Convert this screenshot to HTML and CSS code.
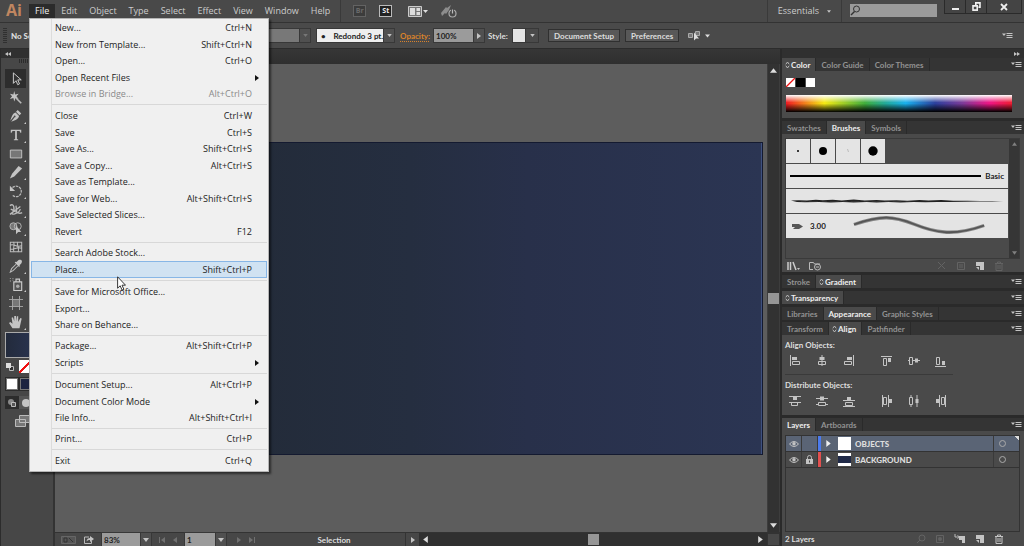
FILE: index.html
```
<!DOCTYPE html>
<html lang="en">
<head>
<meta charset="utf-8">
<title>Vector editor workspace</title>
<link rel="stylesheet" href="styles.css">
</head>
<body>
<svg class="defs" aria-hidden="true">
  <symbol id="flyout" viewBox="0 0 11 7"><path d="M0 1.5h4L2 4z"/><path d="M4.500 1h6v1h-6zM4.500 3h6v1h-6zM4.500 5h6v1h-6z"/></symbol>
  <symbol id="updown" viewBox="0 0 5 8"><path d="M.8 3.300L2.500 1l1.700 2.300M.8 4.700L2.500 7l1.700-2.300" fill="none" stroke="currentColor" stroke-width=".9"/></symbol>
  <symbol id="down" viewBox="0 0 6 4"><path d="M0 0h6L3 4z"/></symbol>
  <symbol id="up" viewBox="0 0 6 4"><path d="M0 4h6L3 0z"/></symbol>
  <symbol id="right" viewBox="0 0 4 6"><path d="M0 0v6l4-3z"/></symbol>
  <symbol id="left" viewBox="0 0 4 6"><path d="M4 0v6L0 3z"/></symbol>
  <symbol id="trash" viewBox="0 0 10 10"><path d="M1 2.500h8M3.500 2.500V1h3v1.500M2 2.500V9.500h6V2.500M4 4v4M6 4v4" fill="none" stroke="currentColor"/></symbol>
  <symbol id="newitem" viewBox="0 0 10 10"><path d="M1 1h8v8H5V5H1z"/><path d="M1 6h3v3z"/></symbol>
  <symbol id="eye" viewBox="0 0 10 8"><path d="M.5 4Q5-1 9.500 4Q5 9 .5 4z" fill="none" stroke="currentColor"/><circle cx="5" cy="3.800" r="1.700"/></symbol>
</svg>

<div class="app">
  <header class="menubar">
    <span class="logo">Ai</span>
    <nav class="menus">
      <button class="open">File</button><button>Edit</button><button>Object</button><button>Type</button><button>Select</button><button>Effect</button><button>View</button><button>Window</button><button>Help</button>
    </nav>
    <div class="apps">
      <button class="badge dim">Br</button>
      <button class="badge">St</button>
      <button class="arrange" aria-label="Arrange documents"><svg width="20" height="11" viewBox="0 0 20 11"><path d="M.5.5h13v10H.5z" fill="#777" stroke="#ccc"/><path d="M2 2h5v7H2zM8.500 2H12v3H8.500zM8.500 6H12v3H8.500z" fill="#ddd"/><path d="M15 4h5l-2.500 3z" fill="#ddd"/></svg></button>
      <button aria-label="GPU performance"><svg width="16" height="14" viewBox="0 0 16 14"><path d="M0 9L5 3l1 1 4-3-2 5-3 4-1-1-3 3z" fill="#8d8d8d"/><circle cx="11.500" cy="9.500" r="3.500" fill="#484848" stroke="#aaa" stroke-width="1.200"/><path d="M11.500 5v5" stroke="#484848" stroke-width="3"/><path d="M11.500 5.500v4" stroke="#bbb" stroke-width="1.200"/></svg></button>
    </div>
    <button class="workspace">Essentials <svg width="4" height="3"><use href="#down"/></svg></button>
    <label class="search"><svg width="11" height="11" viewBox="0 0 11 11"><circle cx="6.500" cy="4" r="3" fill="none" stroke="#333"/><path d="M4.500 6.500L1 10" stroke="#333" stroke-width="1.500"/></svg><input type="search" aria-label="Search"></label>
    <div class="window-buttons">
      <button aria-label="Minimize"><svg width="9" height="9" viewBox="0 0 9 9"><path d="M1 6h7v2H1z"/></svg></button>
      <button aria-label="Restore"><svg width="9" height="9" viewBox="0 0 9 9"><path d="M3.800 3V.9H8v4.200H6.500M1 3.900h4.200v4.200H1z" fill="none" stroke="#eee" stroke-width="1.600"/></svg></button>
      <button class="close" aria-label="Close"><svg width="8" height="8" viewBox="0 0 8 8"><path d="M1 1l6 6M7 1L1 7" stroke="#eee" stroke-width="1.800"/></svg></button>
    </div>
  </header>

  <section class="control">
    <span class="grip"></span>
    <strong class="state">No Selection</strong>
    <label class="combo profile"><select aria-label="Width profile"><option></option></select><span class="drop"><svg width="5" height="3"><use href="#down"/></svg></span></label>
    <label class="combo brush"><select aria-label="Brush definition"><option>•&nbsp;&nbsp;&nbsp; Redondo 3 pt.</option></select><span class="drop"><svg width="5" height="3"><use href="#down"/></svg></span></label>
    <label class="opacity" for="opacity">Opacity:</label>
    <span class="combo percent"><input id="opacity" value="100%"><button class="drop" aria-label="Opacity slider"><svg width="4" height="6"><use href="#right"/></svg></button></span>
    <span class="stylelabel">Style:</span>
    <button class="style" aria-label="Graphic style"><i></i><svg width="5" height="3"><use href="#down"/></svg></button>
    <button class="push">Document Setup</button>
    <button class="push">Preferences</button>
    <button class="similar" aria-label="Select similar"><svg width="22" height="10" viewBox="0 0 22 10"><path d="M.5 2.500h4v4h-4zM7.500.5h4v4h-4z" fill="#777" stroke="#aaa"/><path d="M6 1.500v8l2-2h3z" fill="#ddd"/><path d="M17 3.500h5l-2.500 3z" fill="#ddd"/></svg></button>
    <button class="flyout" aria-label="Panel menu"><svg width="11" height="7"><use href="#flyout"/></svg></button>
  </section>

  <main class="work">
    <aside class="tools">
      <div class="collapse"><svg width="6" height="4" viewBox="0 0 6 4"><path d="M3 0v4L0 2zM6 0v4L3 2z"/></svg></div>
      <div class="toolgrip"></div>
      <div class="toollist">
        <button class="on" aria-label="Selection"><svg viewBox="0 0 16 16"><path d="M5 1v12l3-3 2 4.500 2-1L10 9h4z" fill="#333" stroke="#ddd"/></svg></button>
        <button aria-label="Magic wand"><svg viewBox="0 0 16 16"><path d="M6 0l1 4 4-1-2.500 3L11 9 7.500 8 6 12 5 8 1 9l2.500-3L1 3l4 1z"/><path d="M8 8l6 6" stroke="#bbb" stroke-width="1.800"/></svg></button>
        <button class="more" aria-label="Pen"><svg viewBox="0 0 16 16"><path d="M10 1l4 4-2 2-4-4zM7.500 4l4 4c-1 4-5 5-9 6.500l4-5a1 1 0 1 0-1-1l-4 5C3 9 4 5 7.500 4z"/></svg></button>
        <button class="more" aria-label="Type"><svg viewBox="0 0 16 16"><path d="M2 2h12v3.500h-1L12 3.500H9v9l1.500.5v1h-5v-1l1.500-.5v-9H4L3 5.500H2z"/></svg></button>
        <button class="more" aria-label="Rectangle"><svg viewBox="0 0 16 16"><path d="M1.500 3.500h13v9h-13z" fill="#777" stroke="#ccc"/></svg></button>
        <button class="more" aria-label="Pencil"><svg viewBox="0 0 16 16"><path d="M11 1l4 3-9 9-5 2.500L3.500 10z"/></svg></button>
        <button class="more" aria-label="Rotate"><svg viewBox="0 0 16 16"><path d="M4 4a6 6 0 0 1 10 4 6 6 0 0 1-10 5" fill="none" stroke="#bbb" stroke-width="1.400" stroke-dasharray="3 1"/><path d="M1 2v6h6z"/></svg></button>
        <button class="more" aria-label="Width"><svg viewBox="0 0 16 16"><path d="M1 3c5-4 6 5 3 8s7 2 9-4M2 7c5 2 8 7 13 4M8 3l1 9M1 13l12-9" fill="none" stroke="#bbb" stroke-width="1.500"/></svg></button>
        <button class="more" aria-label="Shape builder"><svg viewBox="0 0 16 16"><circle cx="5" cy="6" r="4" fill="#777" stroke="#bbb"/><circle cx="10" cy="6" r="4" fill="none" stroke="#bbb"/><path d="M8 5v10l2.500-2.500H14z"/></svg></button>
        <button aria-label="Mesh"><svg viewBox="0 0 16 16"><path d="M1.500 2.500h13v11h-13zM1 6c5-3 8 4 14 0M1 10c5 3 8-4 14 0M5 2c3 5-2 7 1 12M10 2c-2 4 3 8 0 12" fill="none" stroke="#bbb" stroke-width="1.200"/></svg></button>
        <button class="more" aria-label="Eyedropper"><svg viewBox="0 0 16 16"><path d="M11 1c3-1 5 1 3 4l-2 2 .5 1-1 1-5-5 1-1 1 .5z"/><path d="M8 6l-5 5-1.500 4L5 13l5-5" fill="none" stroke="#bbb" stroke-width="1.200"/></svg></button>
        <button class="more" aria-label="Symbol sprayer"><svg viewBox="0 0 16 16"><path d="M5.500 5.500h9v10h-9zM8 5V2.500h4V5" fill="#555" stroke="#ccc" stroke-width="1.300"/><circle cx="10" cy="10.500" r="2" fill="#aaa"/><path d="M1 1h1v1H1zM4 1h1v1H4zM1 4h1v1H1zM4 3h1v1H4z"/></svg></button>
        <button aria-label="Artboard"><svg viewBox="0 0 16 16"><path d="M4 4h8v8H4z" fill="#777"/><path d="M4 0v16M12 0v16M0 4h16M0 12h16" fill="none" stroke="#aaa"/></svg></button>
        <button class="more" aria-label="Hand"><svg viewBox="0 0 16 16"><path d="M4 15L0 9l1.500-1L4 10 3 3l1.500-.5L6 7V1h2v6l1-5.500h1.500L10.500 8 13 3.500l1.500.5L12 15z"/></svg></button>
      </div>
      <button class="fill" aria-label="Fill"></button>
      <div class="defaults"><svg width="8" height="8" viewBox="0 0 8 8"><path d="M3.500 3.500h4v4h-4z" fill="#333" stroke="#bbb"/><path d="M0 0h5v5H0z" fill="#ddd"/></svg><span class="none"></span></div>
      <div class="modes"><i class="white"></i><i class="navy"></i></div>
      <div class="draw"><button aria-label="Draw normal"><svg width="10" height="10" viewBox="0 0 10 10"><circle cx="4" cy="4" r="3" fill="#888"/><path d="M4.500 4.500h4v4h-4z" fill="#555" stroke="#bbb"/></svg></button><button aria-label="Draw behind"><svg width="10" height="10" viewBox="0 0 10 10"><circle cx="5" cy="5" r="4"/></svg></button></div>
      <div class="screen"><svg width="16" height="12" viewBox="0 0 16 12"><path d="M4.500.5h11v7h-11zM.5 4.500h10v7H.5z" fill="#777" stroke="#bbb"/></svg></div>
    </aside>

    <section class="document">
      <div class="doctabs"></div>
      <div class="stage">
        <div class="canvas"><div class="artboard"></div></div>
        <div class="vscroll"><svg width="7" height="5"><use href="#up"/></svg><i></i><svg width="7" height="5"><use href="#down"/></svg></div>
      </div>
      <footer class="status">
        <svg class="off" width="15" height="8" viewBox="0 0 15 8"><path d="M.5.5h14v7H.5z" fill="#555" stroke="#666"/><path d="M3 2h3v4H3zM8 2l4 4" fill="none" stroke="#333"/></svg>
        <svg class="share" width="10" height="9" viewBox="0 0 10 9"><path d="M5 2H.5v6.500h7V6" fill="none" stroke="#bbb"/><path d="M2.500 6.500C3 3.500 4 3 6 3V1l4 3-4 3V5C4 5 3.500 5.500 2.500 6.500z"/></svg>
        <span class="combo zoom"><input aria-label="Zoom" value="83%"><button class="drop" aria-label="Zoom levels"><svg width="6" height="4"><use href="#down"/></svg></button></span>
        <svg class="off" width="6" height="6" viewBox="0 0 6 6"><path d="M0 0h1v6H0zM6 0v6L2 3z"/></svg>
        <svg class="off" width="4" height="6"><use href="#left"/></svg>
        <span class="combo page"><input aria-label="Artboard number" value="1"><button class="drop" aria-label="Artboards"><svg width="6" height="4"><use href="#down"/></svg></button></span>
        <svg class="off" width="4" height="6"><use href="#right"/></svg>
        <svg class="off" width="6" height="6" viewBox="0 0 6 6"><path d="M5 0h1v6H5zM0 0v6l4-3z"/></svg>
        <span class="tool">Selection</span>
        <button class="more-status" aria-label="Status options"><svg width="4" height="6"><use href="#right"/></svg></button>
        <div class="hscroll"><svg width="5" height="7"><use href="#left"/></svg><i></i><svg width="5" height="7"><use href="#right"/></svg></div>
        <span class="corner"></span>
      </footer>
    </section>

    <aside class="dock">
      <div class="collapse end"><svg width="6" height="4" viewBox="0 0 6 4"><path d="M0 0v4l3-2zM3 0v4l3-2z"/></svg></div>

      <section class="panel color">
        <div class="tabs"><button class="on twist"><svg width="5" height="8"><use href="#updown"/></svg>Color</button><button>Color Guide</button><button>Color Themes</button><svg class="fly" width="11" height="7"><use href="#flyout"/></svg></div>
        <div class="body"><div class="chips"><i class="none"></i><i class="black"></i><i class="white"></i></div><div class="spectrum"></div></div>
      </section>

      <section class="panel brushes">
        <div class="tabs"><button>Swatches</button><button class="on">Brushes</button><button>Symbols</button><svg class="fly" width="11" height="7"><use href="#flyout"/></svg></div>
        <div class="body">
          <div class="brushbox">
            <div class="brushlist">
              <div class="dots">
                <svg viewBox="0 0 24 24"><circle cx="12" cy="12" r="1"/></svg><svg viewBox="0 0 24 24"><circle cx="12" cy="12" r="4"/></svg><svg viewBox="0 0 24 24"><path d="M11.500 10l1 3" stroke="#aaa" stroke-width=".7"/></svg><svg viewBox="0 0 24 24"><circle cx="12" cy="12" r="4.700"/></svg>
              </div>
              <div class="stroke basic"><i></i><span>Basic</span></div>
              <div class="stroke"><svg viewBox="0 0 223 24" preserveAspectRatio="none"><path d="M5 11.500l8-.3 8 .4 9-.8 7 .5 10-.6 9 .7 12-.8 11 .8 12-.5 8 .7 12-.4 11 .6 12-.8 9 .4 13-.3 12 .6 14 0 13 .2 12 .1 11 .2-11 .4-14-.1-14 .2-15 .4-12-.2-12 .3-12-.3-13 .5-12-.5-12 .6-10-.5-13 .6-11-.7-12 .6-12-.5-14 .2-8-.1z" fill="#222"/><path d="M15 12.500h110" stroke="#333" stroke-dasharray="5 3 9 4" stroke-width=".8"/></svg></div>
              <div class="stroke caligraphic"><svg width="12" height="7" viewBox="0 0 12 7"><path d="M0 1h7l4 2.500L7 6H1l2-2H0z" fill="#555"/></svg><span>3.00</span><svg class="wave" viewBox="0 0 136 24" preserveAspectRatio="none"><path d="M3 10.500C30 1 42 2 62 10s38 13 70 1.500" fill="none" stroke="#888" stroke-width="3.400"/><path d="M3 10.500C30 1 42 2 62 10s38 13 70 1.500" fill="none" stroke="#555" stroke-width="1.800"/></svg></div>
            </div>
            <div class="listscroll"><svg width="5" height="4"><use href="#up"/></svg><svg width="5" height="4"><use href="#down"/></svg></div>
          </div>
          <div class="foot"><svg width="13" height="10" viewBox="0 0 13 10"><path d="M1 1v8M3.500 1v8M6 1l3 8" fill="none" stroke="#ccc" stroke-width="1.500"/><path d="M10 7h3l-1.500 2z"/></svg><svg width="13" height="10" viewBox="0 0 13 10"><path d="M4 8.500H.5v-7h4l1 1.500H11" fill="none" stroke="#bbb"/><circle cx="8.500" cy="6" r="3" fill="none" stroke="#bbb"/><path d="M7 6h3" stroke="#bbb"/></svg><b></b><svg class="faint" width="10" height="10" viewBox="0 0 10 10"><path d="M1 1l7 7M8 1L1 8" stroke="currentColor"/></svg><svg class="faint" width="10" height="10" viewBox="0 0 10 10"><path d="M1.500 1.500h7v7h-7zM3 4h4M3 6h4" fill="none" stroke="currentColor"/></svg><svg width="10" height="10"><use href="#newitem"/></svg><svg class="faint" width="10" height="10"><use href="#trash"/></svg></div>
        </div>
      </section>

      <section class="panel"><div class="tabs"><button>Stroke</button><button class="on twist"><svg width="5" height="8"><use href="#updown"/></svg>Gradient</button><svg class="fly" width="11" height="7"><use href="#flyout"/></svg></div></section>
      <section class="panel"><div class="tabs"><button class="on twist"><svg width="5" height="8"><use href="#updown"/></svg>Transparency</button><svg class="fly" width="11" height="7"><use href="#flyout"/></svg></div></section>
      <section class="panel"><div class="tabs"><button>Libraries</button><button class="on">Appearance</button><button>Graphic Styles</button><svg class="fly" width="11" height="7"><use href="#flyout"/></svg></div></section>

      <section class="panel align">
        <div class="tabs"><button>Transform</button><button class="on twist"><svg width="5" height="8"><use href="#updown"/></svg>Align</button><button>Pathfinder</button><svg class="fly" width="11" height="7"><use href="#flyout"/></svg></div>
        <div class="body">
          <h2>Align Objects:</h2>
          <div class="alignrow">
            <button aria-label="Align left"><svg viewBox="0 0 12 12"><path d="M1 0h1v11H1zM3 2h5v3H3z"/><path d="M3.500 6.500h7v3h-7z" class="o"/></svg></button>
            <button aria-label="Align center"><svg viewBox="0 0 12 12"><path d="M5.500 0h1v11h-1zM3.500 2h5v3h-5z"/><path d="M2.500 6.500h7v3h-7z" class="o"/></svg></button>
            <button aria-label="Align right"><svg viewBox="0 0 12 12"><path d="M10 0h1v11h-1zM4 2h5v3H4z"/><path d="M1.500 6.500h7v3h-7z" class="o"/></svg></button>
            <button aria-label="Align top"><svg viewBox="0 0 12 12"><path d="M0 1h11v1H0zM7 3h3v4H7z"/><path d="M2.500 3.500h3v7h-3z" class="o"/></svg></button>
            <button aria-label="Align middle"><svg viewBox="0 0 12 12"><path d="M0 5h1v1H0zM5 5h7v1H5zM7 3.500h3v4H7z"/><path d="M1.500 2.500h3v7h-3z" class="o"/></svg></button>
            <button aria-label="Align bottom"><svg viewBox="0 0 12 12"><path d="M0 11h11v1H0zM7 6h3v4H7z"/><path d="M1.500 2.500h3v7h-3z" class="o"/></svg></button>
          </div>
          <h2 class="second">Distribute Objects:</h2>
          <div class="alignrow">
            <button aria-label="Distribute top"><svg viewBox="0 0 12 12"><path d="M0 1h12v1H0zM4 2h4v3H4zM0 7h12v1H0z"/><path d="M2.500 7.500h6v3h-6z" class="o"/></svg></button>
            <button aria-label="Distribute middle"><svg viewBox="0 0 12 12"><path d="M0 3h12v1H0zM4 1.500h4v4H4zM0 9h3v1H0zM9 9h3v1H9z"/><path d="M2.500 7.500h7v3h-7z" class="o"/></svg></button>
            <button aria-label="Distribute bottom"><svg viewBox="0 0 12 12"><path d="M0 5h12v1H0zM4 2h4v3H4zM0 11h12v1H0z"/><path d="M2.500 7.500h7v3h-7z" class="o"/></svg></button>
            <button aria-label="Distribute left"><svg viewBox="0 0 12 12"><path d="M1 0h1v12H1zM7 0h1v12H7zM8 4h3v4H8z"/><path d="M2.500 2.500h3v7h-3z" class="o"/></svg></button>
            <button aria-label="Distribute center"><svg viewBox="0 0 12 12"><path d="M2.500 0h1v2h-1zM2.500 10h1v2h-1zM8.500 0h1v12h-1zM7.500 4h3v4h-3z"/><path d="M1.500 2.500h3v7h-3z" class="o"/></svg></button>
            <button aria-label="Distribute right"><svg viewBox="0 0 12 12"><path d="M4 0h1v12H4zM10 0h1v12h-1zM1 4h3v4H1z"/><path d="M6.500 2.500h3v7h-3z" class="o"/></svg></button>
          </div>
        </div>
      </section>

      <section class="panel layers">
        <div class="tabs"><button class="on">Layers</button><button>Artboards</button><svg class="fly" width="11" height="7"><use href="#flyout"/></svg></div>
        <div class="body">
          <ul class="layerlist">
            <li class="selected"><span><svg width="10" height="8"><use href="#eye"/></svg></span><span></span><i class="blue"></i><svg class="arrow" width="5" height="7" viewBox="0 0 4 6"><use href="#right"/></svg><i class="thumb"></i><b>OBJECTS</b><span class="target"><u></u></span></li>
            <li><span><svg width="10" height="8"><use href="#eye"/></svg></span><span><svg width="7" height="9" viewBox="0 0 7 9"><path d="M1.500 4V2.500a2 2 0 0 1 4 0V4" fill="none" stroke="#bbb"/><path d="M0 4h7v5H0z"/><path d="M3 5.500h1v2H3z" fill="#444"/></svg></span><i class="red"></i><svg class="arrow" width="5" height="7" viewBox="0 0 4 6"><use href="#right"/></svg><i class="thumb band"></i><b>BACKGROUND</b><span class="target"><u></u></span></li>
          </ul>
          <div class="foot"><span>2 Layers</span><b></b><svg class="faint" width="10" height="10" viewBox="0 0 10 10"><circle cx="6" cy="4" r="3" fill="none" stroke="currentColor"/><path d="M4 6L1 9" stroke="currentColor"/></svg><svg class="faint" width="10" height="10" viewBox="0 0 10 10"><path d="M1.500 1.500h7v7h-7z" fill="none" stroke="currentColor"/><circle cx="5" cy="5" r="2"/></svg><svg width="12" height="10" viewBox="0 0 12 10"><path d="M1 0v3h4M3.500 1.500L5.500 3l-2 1.500" fill="none" stroke="#bbb"/><path d="M5 2h6v7H8V6H5z"/></svg><svg width="10" height="10"><use href="#newitem"/></svg><svg width="10" height="10"><use href="#trash"/></svg></div>
        </div>
      </section>
    </aside>
  </main>
</div>

<div class="filemenu" role="menu">
  <ul>
    <li><button>New...<kbd>Ctrl+N</kbd></button></li>
    <li><button>New from Template...<kbd>Shift+Ctrl+N</kbd></button></li>
    <li><button>Open...<kbd>Ctrl+O</kbd></button></li>
    <li><button class="sub">Open Recent Files<svg width="4" height="6"><use href="#right"/></svg></button></li>
    <li><button disabled>Browse in Bridge...<kbd>Alt+Ctrl+O</kbd></button></li>
  </ul>
  <ul>
    <li><button>Close<kbd>Ctrl+W</kbd></button></li>
    <li><button>Save<kbd>Ctrl+S</kbd></button></li>
    <li><button>Save As...<kbd>Shift+Ctrl+S</kbd></button></li>
    <li><button>Save a Copy...<kbd>Alt+Ctrl+S</kbd></button></li>
    <li><button>Save as Template...</button></li>
    <li><button>Save for Web...<kbd>Alt+Shift+Ctrl+S</kbd></button></li>
    <li><button>Save Selected Slices...</button></li>
    <li><button>Revert<kbd>F12</kbd></button></li>
  </ul>
  <ul>
    <li><button>Search Adobe Stock...</button></li>
    <li><button class="hover">Place...<kbd>Shift+Ctrl+P</kbd></button></li>
  </ul>
  <ul>
    <li><button>Save for Microsoft Office...</button></li>
    <li><button>Export...</button></li>
    <li><button>Share on Behance...</button></li>
  </ul>
  <ul>
    <li><button>Package...<kbd>Alt+Shift+Ctrl+P</kbd></button></li>
    <li><button class="sub">Scripts<svg width="4" height="6"><use href="#right"/></svg></button></li>
  </ul>
  <ul>
    <li><button>Document Setup...<kbd>Alt+Ctrl+P</kbd></button></li>
    <li><button class="sub">Document Color Mode<svg width="4" height="6"><use href="#right"/></svg></button></li>
    <li><button>File Info...<kbd>Alt+Shift+Ctrl+I</kbd></button></li>
  </ul>
  <ul><li><button>Print...<kbd>Ctrl+P</kbd></button></li></ul>
  <ul><li><button>Exit<kbd>Ctrl+Q</kbd></button></li></ul>
</div>
<svg class="pointer" width="9" height="15" viewBox="0 0 9 15"><path d="M.6.8v11.400l2.600-2.400 1.900 4.300 1.800-.8L5 9.200h3.500z" fill="#fff" stroke="#222" stroke-width=".9"/></svg>
</body>
</html>
```
FILE: styles.css
```
* { box-sizing: border-box; }
body { margin: 0; background: #474747; color: #ccc; font: 9px/12px "Open Sans", "Noto Sans", sans-serif; overflow: hidden; }
button, input, select { margin: 0; padding: 0; border: 0; border-radius: 0; background: none; color: inherit; font: inherit; appearance: none; outline: 0; }
button { display: flex; align-items: center; justify-content: center; white-space: nowrap; }
input { min-width: 0; width: 100%; }
ul { margin: 0; padding: 0; list-style: none; }
svg { display: block; flex: none; fill: #c4c4c4; color: #c4c4c4; }
.defs { position: absolute; width: 0; height: 0; }

.app { display: flex; flex-direction: column; height: 100vh; }

.menubar { display: flex; align-items: flex-start; height: 23px; background: #494949; border-bottom: 1px solid #333; }
.logo { width: 29px; padding-left: 6px; font: bold 16px/20px "Open Sans", sans-serif; color: #c08660; }
.menus { display: flex; }
.menus button { height: 22px; padding: 0 6px; font-size: 9px; }
.menus .open { height: 18px; margin-top: 4px; padding-bottom: 4px; background: #2b2b2b; color: #eee; }
.apps { display: flex; align-items: center; flex: 1; height: 22px; margin-left: 4px; padding-left: 12px; border-left: 1px solid #3a3a3a; }
.badge { width: 13px; height: 12px; margin-right: 13px; border: 1px solid #bbb; background: #222; font-size: 7px; font-weight: 700; color: #eee; }
.badge.dim { border-color: #636363; background: #3c3c3c; color: #6a6a6a; }
.badge:not(.dim) { margin-right: 16px; }
.arrange { margin-right: 13px; }
.workspace { height: 22px; padding: 0 10px; gap: 8px; border: solid #3a3a3a; border-width: 0 1px; margin-right: 8px; }
.search { display: flex; align-items: center; width: 87px; height: 13px; margin-top: 4px; background: #9b9b9b; }
.search input { color: #222; }
.window-buttons { display: flex; margin: 0 2px 0 7px; border: 1px solid #2a2a2a; border-top: 0; background: #444; }
.window-buttons button { width: 21px; height: 13px; border-right: 1px solid #2a2a2a; }
.window-buttons svg { fill: #eee; }
.window-buttons .close { width: 34px; border: 0; }

.control, .status, .dock { font-family: Lato, "Open Sans", sans-serif; font-size: 8px; font-weight: 700; }
.control { display: flex; align-items: center; height: 26px; background: #4a4a4a; border-bottom: 1px solid #2c2c2c; }
.grip { width: 4px; height: 15px; margin: 0 4px 0 3px; background: repeating-linear-gradient(#303030 0 1px, #4a4a4a 1px 2px); }
.state { width: 189px; color: #ddd; }
.combo { display: flex; height: 13px; outline: 1px solid #383838; }
.combo select, .combo input { flex: 1; min-width: 0; background: #9b9b9b; color: #222; }
.drop { display: flex; flex: none; align-items: center; justify-content: center; width: 11px; background: #505050; border-left: 1px solid #383838; }
.profile { width: 110px; margin-right: 7px; }
.profile select { background: #787878; }
.profile svg { fill: #777; }
.brush { width: 77px; margin-right: 6px; }
.brush select { padding-left: 4px; background: #eee; }
.opacity { width: 29px; margin-right: 5px; color: #d9822b; text-decoration: underline dotted; text-underline-offset: 2px; }
.percent { width: 50px; margin-right: 4px; }
.percent input { padding-left: 2px; }
.stylelabel { width: 25px; color: #ddd; }
.style { width: 25px; height: 13px; margin-right: 10px; gap: 4px; outline: 1px solid #383838; justify-content: flex-start; }
.style i { width: 13px; height: 13px; background: #e4e4e4; border-right: 1px solid #383838; }
.push { height: 13px; padding: 0 5px; margin-right: 5px; background: #585858; border: 1px solid #303030; color: #ddd; }
.similar { margin-left: 4px; }
.flyout { margin: 0 11px 0 auto; }

.work { display: flex; flex: 1; min-height: 0; }
.collapse { display: flex; align-items: center; height: 9px; padding: 0 4px; background: #303030; }
.collapse.end { justify-content: flex-end; }

.tools { flex: none; width: 55px; border-right: 2px solid #333; border-left: 1px solid #2c2c2c; background: #474747; }
.toolgrip { height: 4px; margin: 1px 16px 6px 18px; background: repeating-linear-gradient(90deg, #2c2c2c 0 1px, #474747 1px 2px); }
.toollist { display: flex; flex-direction: column; padding-left: 4px; }
.toollist button { position: relative; width: 21px; height: 19px; }
.toollist button:nth-child(3n) { height: 18px; }
.toollist svg { width: 14px; height: 14px; }
.toollist .on { background: #2d2d2d; }
.more::after { content: ""; position: absolute; right: 0; bottom: 1px; border: 1px solid; border-color: transparent #ccc #ccc transparent; }
.fill { width: 40px; height: 26px; margin: 1px 0 2px 4px; border: 1px solid #aaa; background: linear-gradient(90deg, #232b3c, #2b3656); }
.defaults { display: flex; align-items: center; gap: 5px; padding-left: 5px; }
.none { width: 13px; height: 13px; background: linear-gradient(to bottom right, #fff 44%, #e11 45% 55%, #fff 56%); }
.modes { display: flex; gap: 4px; width: 40px; margin: 4px 0 5px 4px; padding: 2px; background: #2c2c2c; }
.modes i { width: 10px; height: 10px; margin: 0; outline: 1px solid #777; }
.white { background: #fff; }
.navy { background: #1c2440; }
.draw { display: flex; padding-left: 4px; }
.draw button { width: 14px; height: 13px; background: #2c2c2c; }
.draw button + button { background: #555; }
.screen { padding: 6px 0 0 14px; }

.document { display: flex; flex: 1; flex-direction: column; min-width: 0; }
.doctabs { height: 15px; background: linear-gradient(#363636, #2f2f2f); }
.stage { display: flex; flex: 1; min-height: 0; }
.canvas { display: flex; flex: 1; padding: 78px 4px 77px 120px; background: #5d5d5d; }
.artboard { flex: 1; border: 1px solid #141a30; background: linear-gradient(90deg, #222a36, #252e40 40%, #28304a 60%, #2b3553); box-shadow: inset -1px 0 #3f5180; }
.vscroll { display: flex; flex-direction: column; align-items: center; justify-content: space-between; width: 13px; padding: 4px 0; background: #323232; border: solid #3d3d3d; border-width: 0 1px; }
.vscroll i { width: 11px; height: 11px; background: #969696; }
.vscroll svg, .hscroll svg { fill: #ddd; }
.status { display: flex; align-items: center; height: 14px; border-top: 1px solid #333; background: #474747; }
.status > svg { margin-right: 8px; }
.status > svg:first-child { margin-left: 6px; }
.status .off { fill: #707070; }
.status .share { margin-right: 8px; }
.zoom, .page { width: 49px; margin-right: 8px; }
.zoom input, .page input { padding-left: 2px; }
.page { width: 41px; }
.page { margin-right: 11px; }
.tool { flex: 1; text-align: center; color: #ddd; }
.more-status { width: 14px; height: 13px; border-left: 1px solid #333; }
.hscroll { display: flex; flex: none; align-items: center; justify-content: space-between; width: 48%; height: 13px; padding: 0 4px; background: #303030; }
.hscroll i { width: 11px; height: 11px; background: #969696; }
.corner { width: 13px; height: 13px; background: #484848; border: 1px solid #333; }

.dock { display: flex; flex: none; flex-direction: column; width: 244px; border-left: 2px solid #2a2a2a; background: #4a4a4a; }
.panel + .panel { border-top: 3px solid #2a2a2a; }
.panel + .align { border-top-width: 2px; }
.tabs { display: flex; height: 13px; background: #343434; }
.tabs button { padding: 0 5px; border-right: 1px solid #2a2a2a; color: #929292; }
.tabs .on { background: #4a4a4a; color: #eee; }
.tabs .twist { padding-left: 3px; gap: 1px; }
.fly { margin: 3px 2px 0 auto; }
.color .body { height: 47px; padding: 7px 12px 0 4px; }
.chips { display: flex; }
.chips i { width: 9px; height: 9px; margin-right: 1px; }
.chips .none { width: 9px; height: 9px; }
.black { background: #000; }
.spectrum { height: 17px; margin-top: 8px; background: linear-gradient(#fff 0, transparent 45%, transparent 50%, #000 100%), linear-gradient(90deg, #f01822, #f5ea14 17%, #3fae3c 35%, #2a9 44%, #18b0ee 53%, #2b3f9c 66%, #7a3a98 78%, #ee1484 90%, #ee1c30); }
.brushes .body { height: 138px; padding: 4px 4px 0 3px; }
.brushbox { display: flex; height: 121px; border: 1px solid #3a3a3a; }
.brushlist { flex: 1; color: #222; }
.dots { display: flex; height: 25px; gap: 1px; }
.dots svg { width: 24px; height: 24px; background: #e4e4e4; fill: #000; }
.stroke { display: flex; align-items: center; height: 24px; margin: 0 1px 1px 0; background: #e4e4e4; }
.stroke svg { width: 100%; height: 24px; }
.basic i { flex: 1; height: 2px; margin: 0 4px; background: #000; }
.basic span { margin-right: 4px; }
.stroke.caligraphic svg { width: 12px; height: 7px; margin: 0 6px; }
.stroke.caligraphic .wave { flex: 1; height: 24px; margin: 0 20px 0 25px; }
.listscroll { display: flex; flex-direction: column; align-items: center; justify-content: space-between; width: 10px; padding: 3px 0; background: #363636; }
.listscroll svg { fill: #808080; }
.foot { display: flex; align-items: center; gap: 9px; height: 14px; padding: 0 16px 0 2px; }
.foot b { flex: 1; }
.foot .faint { fill: #636363; color: #636363; }
.align .body { height: 80px; padding: 4px 3px; }
h2 { margin: 0; font: inherit; line-height: 12px; color: #ddd; }
.alignrow { display: flex; gap: 15px; padding: 4px 6px 0 4px; }
.alignrow svg { width: 12px; height: 12px; }
.alignrow button:nth-child(4) { margin-left: 11px; }
.alignrow .o { fill: none; stroke: #c4c4c4; }
.second { width: 168px; margin-top: 7px; padding-top: 4px; border-top: 1px solid #3a3a3a; }
.layers { display: flex; flex: 1; flex-direction: column; }
.layers .body { display: flex; flex: 1; flex-direction: column; padding: 4px 4px 0 3px; }
.layerlist { flex: 1; border: 1px solid #333; }
.layerlist li { display: flex; align-items: center; height: 16px; border-bottom: 1px solid #333; }
.layerlist .selected { background: linear-gradient(225deg, #ddd 3px, transparent 3px) #5a6475; }
.layerlist span { display: flex; align-items: center; justify-content: center; flex: none; width: 16px; height: 15px; border-right: 1px solid #3a3a3a; }
.blue, .red { width: 3px; height: 15px; background: #4b7bee; }
.red { background: #e2504f; }
.arrow { margin: 0 7px 0 5px; fill: #eee; }
.thumb { width: 13px; height: 13px; margin-right: 4px; background: #fff; }
.band { background: linear-gradient(#fff 3px, #202a48 3px 10px, #fff 10px); }
.layerlist b { flex: 1; color: #ddd; }
.layerlist .target { width: 26px; padding-right: 9px; border: 0; border-left: 1px solid #3a3a3a; }
.target u { width: 7px; height: 7px; border: 1px solid #aaa; border-radius: 50%; }
.layers .foot { padding-left: 0; color: #ddd; }

.filemenu { position: absolute; top: 18px; left: 29px; width: 240px; padding: 1px 1px 2px; border: 1px solid #b5b5b5; background: linear-gradient(90deg, transparent 21px, #dcdcdc 21px 22px, transparent 22px) #f0f0f0; color: #1c1c1c; box-shadow: 2px 2px 2px #0008; }
.filemenu li { display: flex; height: 16px; }
.filemenu li:nth-child(even) { height: 17px; }
.filemenu ul + ul { position: relative; margin-top: 2px; padding-top: 4px; }
.filemenu ul:nth-child(odd) { padding-top: 3px; }
.filemenu ul:first-child { padding-top: 0; }
.filemenu ul + ul::before { content: ""; position: absolute; top: 0; right: 0; left: 21px; border-top: 1px solid #d8d8d8; }
.filemenu button { flex: 1; justify-content: space-between; padding: 0 14px 0 23px; border: 1px solid transparent; }
.filemenu button:disabled { color: #8a8a8a; }
.filemenu .hover { border-color: #87b6e6; background: #d0e2f2; }
.filemenu .sub { padding-right: 7px; }
.filemenu svg { fill: #111; }
kbd { font: inherit; }
.pointer { position: absolute; top: 276px; left: 117px; }
```
